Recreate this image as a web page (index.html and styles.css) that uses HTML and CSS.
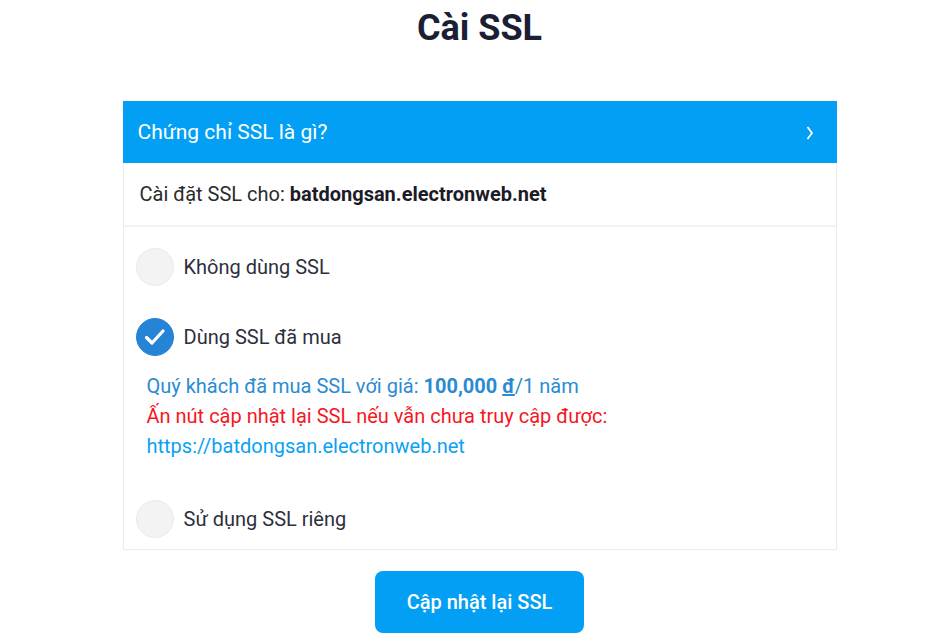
FILE: index.html
```html
<!DOCTYPE html>
<html lang="vi">
<head>
	<meta charset="UTF-8">
	<meta name="viewport" content="width=device-width, initial-scale=1.0">
	<link rel="stylesheet" href="styles.css">
	<title>Cài SSL</title>
</head>
<body>
	<h1 class="title">Cài SSL</h1>
	<div class="card">
		<div class="card-head">
			<span>Chứng chỉ SSL là gì?</span>
			<svg class="chevron" viewBox="0 0 8 14" width="8" height="14"><path d="M1.5 1l4.5 6-4.5 6" fill="none" stroke="#fff" stroke-width="1.8" stroke-linejoin="round"/></svg>
		</div>
		<div class="domain"><span>Cài đặt SSL cho: <b>batdongsan.electronweb.net</b></span></div>
		<div class="options">
			<label class="option">
				<span class="radio"></span>
				<span>Không dùng SSL</span>
			</label>
			<label class="option checked">
				<span class="radio">
					<svg viewBox="0 0 38 38" width="38" height="38"><path d="M10.5 19.5l5.5 5.5 11-12" fill="none" stroke="#fff" stroke-width="3.2" stroke-linecap="round" stroke-linejoin="round"/></svg>
				</span>
				<span>Dùng SSL đã mua</span>
			</label>
			<div class="info">
				<p class="price">Quý khách đã mua SSL với giá: <b>100,000 <u>đ</u></b>/1 năm</p>
				<p class="warn">Ấn nút cập nhật lại SSL nếu vẫn chưa truy cập được:</p>
				<a href="#">https://batdongsan.electronweb.net</a>
			</div>
			<label class="option last">
				<span class="radio"></span>
				<span>Sử dụng SSL riêng</span>
			</label>
		</div>
	</div>
	<button class="update">Cập nhật lại SSL</button>
</body>
</html>
```

FILE: styles.css
```css
*{
	padding: 0;
	margin: 0;
	box-sizing: border-box;
	font-family: Roboto, 'Liberation Sans', sans-serif;
}
body{
	display: flex;
	flex-direction: column;
	align-items: center;
	padding-left: 12px;
	background: #fff;
	color: #2e2f3e;
}
.title{
	font-size: 36px;
	font-weight: 700;
	color: #1a1f36;
	line-height: 42px;
	margin-top: 7px;
	height: 94px;
}
.card{
	width: 714px;
	border: 1px solid #ececec;
	border-top: none;
}
.card-head{
	height: 62px;
	background: #039ff4;
	color: #fff;
	font-size: 21px;
	display: flex;
	align-items: center;
	justify-content: space-between;
	padding: 0 23px 0 15px;
	margin: 0 -1px;
}
.chevron{
	margin-top: 2px;
}
.domain{
	height: 64px;
	display: flex;
	align-items: center;
	padding-left: 16px;
	font-size: 20px;
	color: #2b2b2b;
	border-bottom: 2px solid #f0f2f5;
}
.domain b{
	font-weight: 700;
	color: #1c1c28;
}
.options{
	display: flex;
	flex-direction: column;
	padding: 21px 12px 11px;
}
.option{
	display: flex;
	align-items: center;
	gap: 10px;
	height: 38px;
	font-size: 20px;
	color: #2e2f3e;
}
.option + .option{
	margin-top: 32px;
}
.radio{
	width: 38px;
	height: 38px;
	border-radius: 50%;
	background: #f4f3f4;
	border: 1px solid #eaeaea;
	display: flex;
}
.checked .radio{
	background: #2584d6;
	border-color: #2584d6;
}
.checked .radio svg{
	margin: -1px;
}
.info{
	padding: 15px 0 39px 11px;
	font-size: 20px;
	line-height: 30px;
}
.price{
	color: #2a8bd2;
}
.price b{
	font-weight: 700;
}
.warn{
	color: #f5161f;
}
.info a{
	color: #0aa1f2;
	text-decoration: none;
}
.update{
	margin-top: 21px;
	width: 209px;
	height: 62px;
	border: none;
	border-radius: 8px;
	background: #039ff4;
	color: #fff;
	font-size: 20px;
	font-weight: 500;
	cursor: pointer;
}
```
